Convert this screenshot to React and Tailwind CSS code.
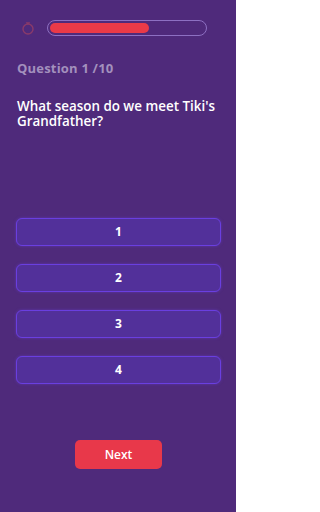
import React, { useState } from "react";

const options = ["1", "2", "3", "4"];

const Timer = () => (
  <svg width="14" height="14" viewBox="0 0 14 14" fill="none" className="shrink-0">
    <circle cx="7" cy="8" r="5" stroke="#8a3a6a" strokeWidth="1.4" />
    <path d="M5.5 1.8h3M7 1.8v1.2" stroke="#8a3a6a" strokeWidth="1.3" strokeLinecap="round" />
  </svg>
);

export default function App() {
  const [picked, setPicked] = useState(null);
  const progress = 64;

  return (
    <div
      className="w-[236px] h-[512px] bg-[#4f2a7b] flex flex-col px-[16px] overflow-hidden"
      style={{ fontFamily: '"Open Sans", "Liberation Sans", sans-serif' }}
    >
      <div className="flex items-center gap-[12px] pt-[20px] pl-[5px]">
        <Timer />
        <div className="flex-1 h-[16px] mr-[13px] rounded-full border-[1.5px] border-[#8d70c2] p-[2px] flex">
          <div className="h-full rounded-full bg-[#ea3a48]" style={{ width: `${progress}%` }} />
        </div>
      </div>

      <p className="mt-[24px] pl-[1px] text-[13px] font-bold text-[#a390bd] leading-[16px] tracking-[0.2px]">
        Question 1 /10
      </p>

      <p className="mt-[23px] pl-[1px] text-[13.4px] font-semibold text-white leading-[15px]">
        What season do we meet Tiki's Grandfather?
      </p>

      <div className="mt-[89px] flex flex-col gap-[18px]">
        {options.map((o) => (
          <button
            key={o}
            onClick={() => setPicked(o)}
            className={`h-[28px] w-[205px] rounded-[6px] border-[1.5px] border-[#6a3fe0] text-white text-[12px] font-bold shadow-[0_0_3px_rgba(110,70,230,0.5)] ${
              picked === o ? "bg-[#6238b0]" : "bg-[#52309a]"
            }`}
          >
            {o}
          </button>
        ))}
      </div>

      <div className="flex justify-center mt-[56px]">
        <button className="w-[87px] h-[29px] rounded-[5px] bg-[#e8384a] text-white text-[12px] font-semibold ml-[1px]">
          Next
        </button>
      </div>
    </div>
  );
}
